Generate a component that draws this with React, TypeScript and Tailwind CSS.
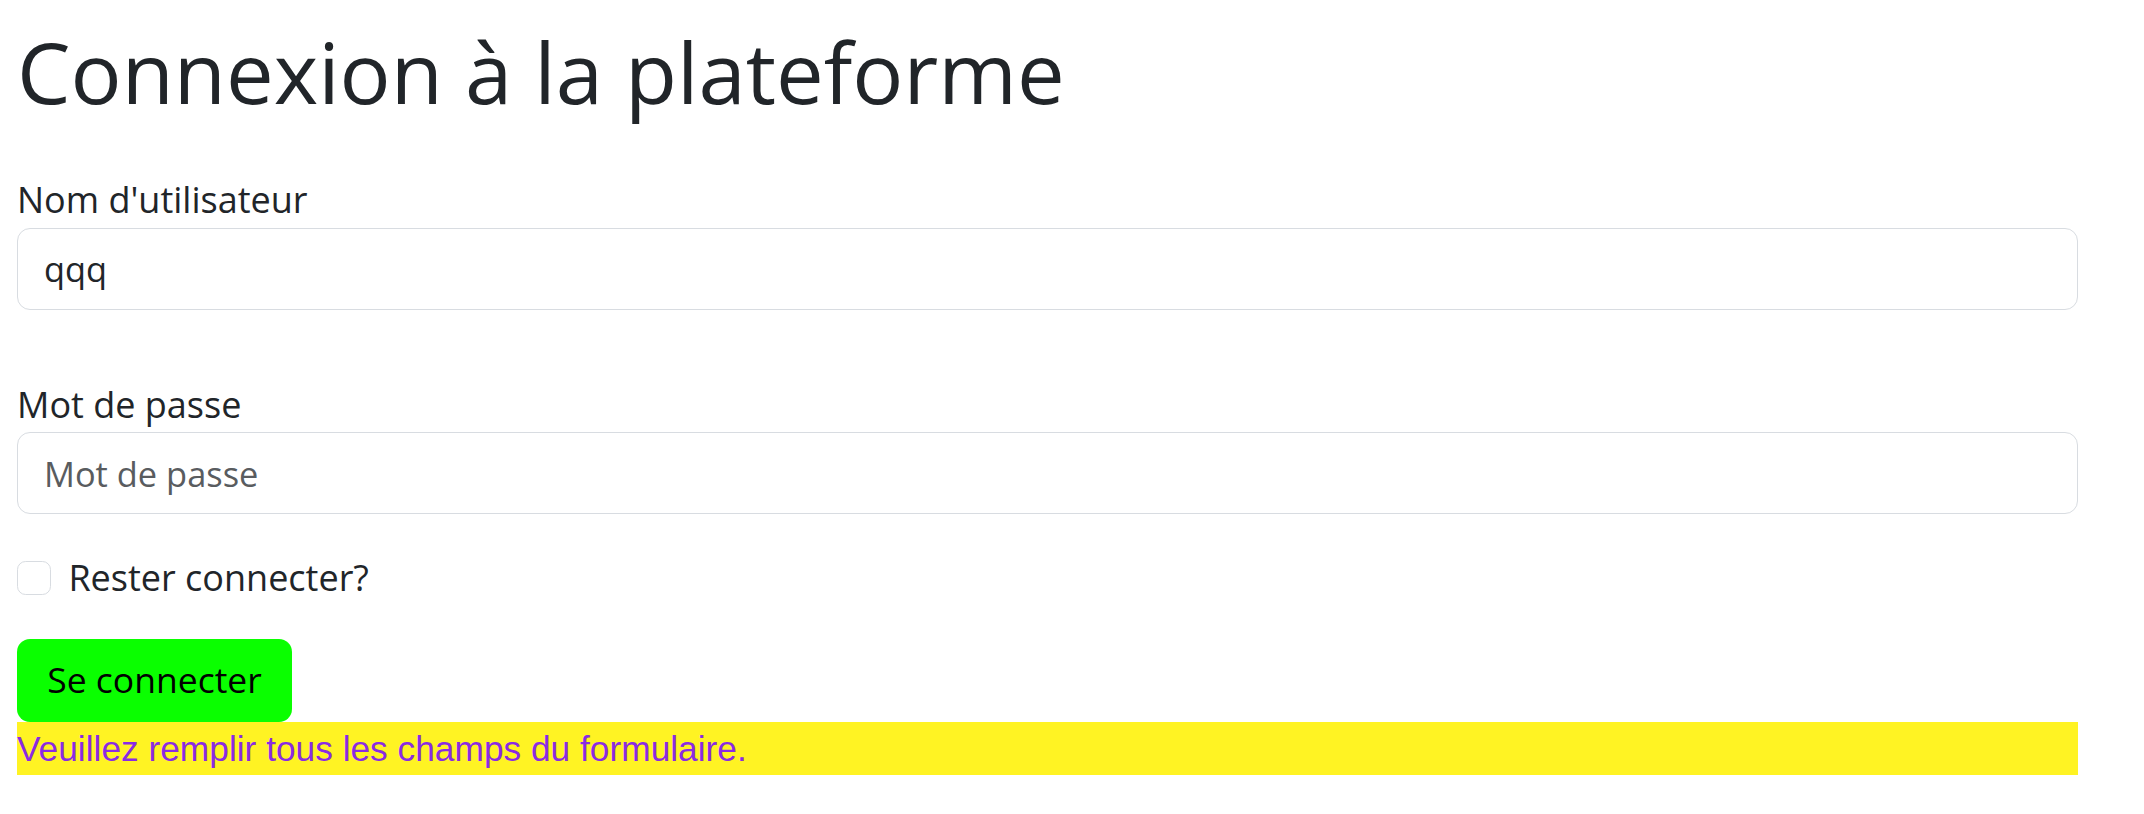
import React, { useState } from 'react';

const comic = '[font-family:"Comic_Sans_MS","Open_Sans",sans-serif]';

export default function App() {
    const [username, setUsername] = useState('qqq');
    const [password, setPassword] = useState('');
    const [remember, setRemember] = useState(false);

    return (
        <div className={`min-h-[814px] bg-white pl-[17px] pr-[66px] pt-[20px] text-[#212529] ${comic}`}>
            <h1 className="text-[85px] leading-[103px] font-normal mb-[51px]">Connexion à la plateforme</h1>

            <form onSubmit={e => e.preventDefault()}>
                {/* Username */}
                <label className="block text-[36px] leading-[51.6px] mb-[2px]" htmlFor="username">
                    Nom d'utilisateur
                </label>
                <input
                    id="username"
                    className={`block w-full h-[82px] px-[26px] text-[34.4px] border-[1.5px] border-[#d8dce1] rounded-[13px] outline-none ${comic}`}
                    value={username}
                    onChange={e => setUsername(e.target.value)}
                />

                {/* Password */}
                <label className="block text-[36px] leading-[51.6px] mt-[69px] mb-[2px]" htmlFor="password">
                    Mot de passe
                </label>
                <input
                    id="password"
                    type="password"
                    placeholder="Mot de passe"
                    className={`block w-full h-[82px] px-[26px] text-[34.4px] border-[1.5px] border-[#d8dce1] rounded-[13px] outline-none placeholder:text-[#595c5f] ${comic}`}
                    value={password}
                    onChange={e => setPassword(e.target.value)}
                />

                {/* Remember me */}
                <label className="flex items-start gap-[17px] mt-[38px] text-[36px] leading-[51.6px]">
                    <input
                        type="checkbox"
                        checked={remember}
                        onChange={e => setRemember(e.target.checked)}
                        className="appearance-none shrink-0 w-[34.4px] h-[34.4px] mt-[8.6px] border-[1.5px] border-[#d8dce1] rounded-[8.6px] bg-white checked:bg-[#0d6efd]"
                    />
                    <span>Rester connecter?</span>
                </label>

                <button
                    type="submit"
                    className={`block mt-[35px] w-[275px] h-[83px] bg-[#0aff00] text-black text-[35.5px] leading-[51.6px] rounded-[13px] ${comic}`}
                >
                    Se connecter
                </button>
            </form>

            <div className="h-[53px] bg-[#fff323] text-[#8a2be2] text-[35.3px] leading-[53px] [font-family:'Liberation_Sans',Arial,sans-serif]">
                Veuillez remplir tous les champs du formulaire.
            </div>
        </div>
    );
}
